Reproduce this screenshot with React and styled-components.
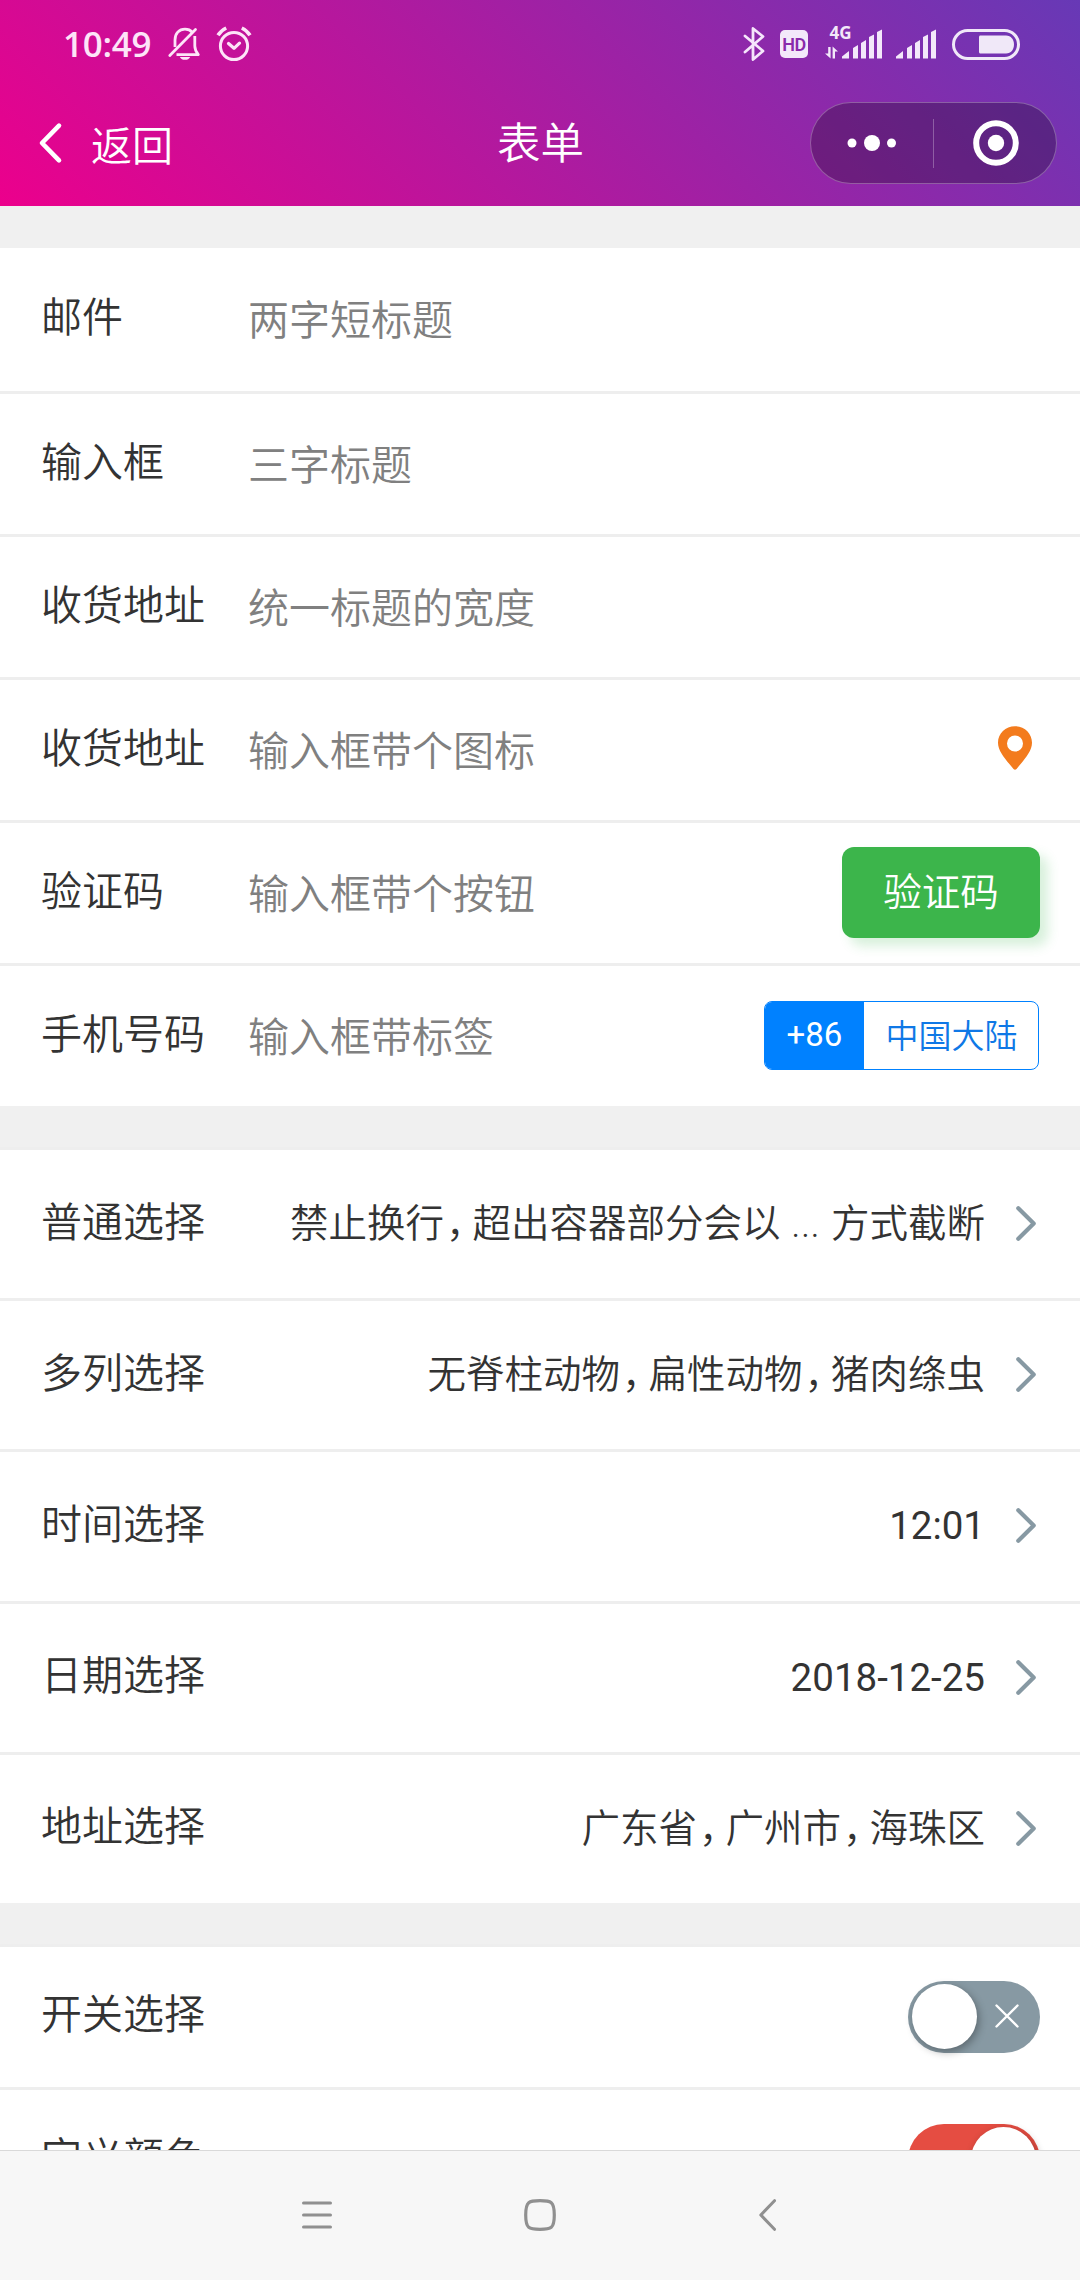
import React from 'react';
import styled, { createGlobalStyle } from 'styled-components';

const GlobalStyle = createGlobalStyle`
  * {
    box-sizing: border-box;
  }
  body {
    margin: 0;
    background: #f0f0f0;
    font-family: Roboto, "Noto Sans CJK SC", sans-serif;
    color: #333;
  }
  svg {
    display: block;
    flex-shrink: 0;
    overflow: visible;
  }
`;

const Screen = styled.div`
  width: 1080px;
  height: 2280px;
  display: flex;
  flex-direction: column;
  overflow: hidden;
  background: #f0f0f0;
`;

const Header = styled.header`
  height: 206px;
  flex-shrink: 0;
  color: #fff;
  background: linear-gradient(45deg, #ec008c, #6739b6);
`;

const StatusBar = styled.div`
  height: 88px;
  padding: 0 60px 0 63px;
  display: flex;
  justify-content: space-between;
  align-items: center;
  color: #fde4f8;
`;

const StatusSide = styled.div`
  display: flex;
  align-items: center;
  height: 88px;
`;

const Clock = styled.span`
  width: 105px;
  font-family: "Open Sans", sans-serif;
  font-size: 35px;
  font-weight: 600;
  letter-spacing: -0.3px;
  line-height: 88px;
`;

const TitleBar = styled.div`
  height: 110px;
  padding: 0 24px 0 39px;
  display: grid;
  grid-template-columns: 246px 1fr 246px;
  align-items: center;
`;

const Back = styled.div`
  display: flex;
  align-items: center;
  gap: 29px;
  font-family: "Noto Sans CJK SC", sans-serif;
  font-size: 41px;
  font-weight: 350;
  line-height: 60px;
  span {
    padding-bottom: 1px;
  }
`;

const Title = styled.h1`
  margin: 0 14px 0 0;
  padding-bottom: 5px;
  text-align: center;
  font-family: "Noto Sans CJK SC", sans-serif;
  font-size: 43.5px;
  font-weight: 350;
  line-height: 60px;
`;

const Capsule = styled.div`
  width: 247px;
  height: 82px;
  display: flex;
  align-items: center;
  border: 1px solid rgba(255, 255, 255, 0.28);
  border-radius: 41px;
  background: rgba(0, 0, 0, 0.25);
`;

const CapsuleHalf = styled.div`
  flex: 1;
  display: flex;
  justify-content: center;
  align-items: center;
  & + & {
    height: 49px;
    border-left: 1px solid rgba(255, 255, 255, 0.28);
  }
`;

const Page = styled.main`
  flex: 1;
  min-height: 0;
  overflow: hidden;
`;

const Group = styled.section`
  margin-top: ${({ $top }) => $top || 41}px;
`;

const Row = styled.div`
  height: ${({ $height }) => $height || 143}px;
  padding: 0 40px 0 41px;
  display: flex;
  align-items: center;
  background: #fff;
  border-top: ${({ $first }) => ($first ? 'none' : '3px solid #eee')};
`;

const Label = styled.div`
  width: 207px;
  flex-shrink: 0;
  padding-bottom: 11px;
  font-family: "Noto Sans CJK SC", sans-serif;
  font-size: 41px;
  font-weight: 350;
  line-height: 60px;
  white-space: nowrap;
`;

const Input = styled.input`
  flex: 1;
  min-width: 0;
  height: 80px;
  padding: 0 0 5px;
  border: none;
  outline: none;
  background: none;
  font-family: "Noto Sans CJK SC", sans-serif;
  font-size: 41px;
  font-weight: 350;
  &::placeholder {
    color: #808080;
    opacity: 1;
  }
`;

const Value = styled.div`
  flex: 1;
  text-align: right;
  margin-right: 31px;
  font-size: 38.5px;
  font-weight: ${({ $digits }) => ($digits ? 400 : 350)};
  line-height: 60px;
  white-space: nowrap;
`;

const Comma = styled.span`
  margin-left: 2px;
  letter-spacing: -12px;
`;

const CodeButton = styled.button`
  width: 198px;
  height: 91px;
  margin-bottom: 2px;
  padding: 0 0 6px;
  border: none;
  border-radius: 12px;
  color: #fff;
  background: #3cb54b;
  box-shadow: 8px 8px 12px rgba(57, 181, 74, 0.2);
  font-family: "Noto Sans CJK SC", sans-serif;
  font-size: 38.6px;
  font-weight: 350;
`;

const Tag = styled.div`
  width: 275px;
  height: 69px;
  display: flex;
  margin: 0 1px 2px 0;
  border: 1px solid #0081ff;
  border-radius: 8px;
  overflow: hidden;
  font-size: 33px;
  line-height: 66px;
  text-align: center;
`;

const TagCode = styled.span`
  width: 99px;
  color: #fff;
  background: #0081ff;
`;

const TagName = styled.span`
  flex: 1;
  padding-left: 1px;
  color: #0f78e6;
  font-family: "Noto Sans CJK SC", sans-serif;
  font-weight: 350;
  line-height: 64px;
`;

const Switch = styled.div`
  width: 132px;
  height: 72px;
  margin-left: auto;
  padding: 3px 4px;
  display: flex;
  flex-direction: ${({ $on }) => ($on ? 'row-reverse' : 'row')};
  align-items: center;
  border-radius: 36px;
  background: ${({ $on }) => ($on ? '#e54d42' : '#8799a3')};
`;

const Knob = styled.div`
  width: 65px;
  height: 65px;
  border-radius: 50%;
  background: #fff;
  box-shadow: 2px 3px 8px rgba(0, 0, 0, 0.32);
`;

const SwitchMark = styled.div`
  flex: 1;
  display: flex;
  justify-content: center;
  padding-bottom: 2px;
`;

const NavBar = styled.nav`
  height: 130px;
  flex-shrink: 0;
  padding: 0 0 2px 302px;
  display: grid;
  grid-template-columns: 222px 235px 17px;
  align-items: center;
  border-top: 1px solid #d9d9d9;
  background: #f7f7f7;
`;

const BellOff = () => (
  <svg width="32" height="34" viewBox="0 0 32 34" fill="none" stroke="currentColor" strokeWidth="2.8">
    <path d="M7 20V13C7 6.5 11 2.2 17 2.2C20 2.2 22.5 3.2 24.3 5.2" />
    <path d="M26.8 9V19C26.8 23 28.6 25.5 30.3 27.6H8.5" strokeLinejoin="round" />
    <path d="M1.8 28.5L27.5 2.5" strokeLinecap="round" />
    <path d="M11.8 30H22.2C21 32 19.5 32.8 17 32.8C14.5 32.8 13 32 11.8 30Z" fill="currentColor" stroke="none" />
  </svg>
);

const Alarm = () => (
  <svg width="36" height="36" viewBox="0 0 36 36" fill="none" stroke="currentColor" strokeWidth="3" style={{ marginLeft: 16 }}>
    <circle cx="18" cy="20" r="13.6" />
    <path d="M12.5 17.5L18 22.3L23.5 17.2" strokeLinecap="round" strokeLinejoin="round" strokeWidth="3.2" />
    <path d="M2 9.3C4 6 6.5 3.8 10.2 2M34 9.3C32 6 29.5 3.8 25.8 2" strokeWidth="3.6" />
  </svg>
);

const Bluetooth = () => (
  <svg width="22" height="36" viewBox="0 0 22 36" fill="none" stroke="#f5e6fb" strokeWidth="2.8" strokeLinecap="round" strokeLinejoin="round">
    <path d="M2 10L20 25L10 33.5V2.5L20 10.5L2 26" />
  </svg>
);

const Hd = styled.span`
  width: 28px;
  height: 28px;
  margin: 0 17px 0 15px;
  border-radius: 5px;
  text-align: center;
  color: #8a2aab;
  background: #f3e8fa;
  font-family: Roboto, sans-serif;
  font-size: 18px;
  font-weight: 600;
  line-height: 29px;
  letter-spacing: -0.4px;
`;

const bars = 'M0 29V27L7 21.5V29ZM11 29V18.5L16 15.5V29ZM19 29V13.5L24 10.5V29ZM27 29V7.5L32 5V29ZM35 29V2.5L40 0V29Z';

const Signal4G = () => (
  <svg width="57" height="34" viewBox="0 0 57 34" fill="#f3e8fa">
    <text x="4.5" y="12" fontFamily="Open Sans, sans-serif" fontSize="17" fontWeight="700">4G</text>
    <path d="M3.2 20H5.6V31.6L0 26.5H3.2ZM7.6 31.6V19.4L13 24.5H10V31.6Z" />
    <path d={bars} transform="translate(17 2.4)" />
  </svg>
);

const Signal = () => (
  <svg width="40" height="34" viewBox="0 0 40 34" fill="#f3e8fa" style={{ margin: '0 16px 0 14px' }}>
    <path d={bars} transform="translate(0 2.4)" />
  </svg>
);

const Battery = () => (
  <svg width="68" height="31" viewBox="0 0 68 31" fill="none">
    <rect x="1.5" y="1.5" width="65" height="28" rx="14" stroke="#f0e8f8" strokeWidth="3" />
    <path d="M28.5 6.5H54C59 6.5 62 10.5 62 15.5C62 20.5 59 24.5 54 24.5H28.5C27.6 24.5 27 23.9 27 23V8C27 7.1 27.6 6.5 28.5 6.5Z" fill="#f0e8f8" />
  </svg>
);

const Arrow = () => (
  <svg width="20" height="36" viewBox="0 0 20 36" fill="none" stroke="#8799a3" strokeWidth="4.2" strokeLinecap="round" strokeLinejoin="round" style={{ marginRight: 4 }}>
    <path d="M2.3 2.3L17.7 17.5L2.3 32.7" />
  </svg>
);

const Pin = () => (
  <svg width="34" height="44" viewBox="0 0 34 44" fill="#f37b1d" style={{ margin: '0 8px 4px 0' }}>
    <path fillRule="evenodd" d="M17 0.3C26.5 0.3 34 7.5 34 16.8C34 26 25 35 18.5 43C17.6 44 16.4 44 15.5 43C9 35 0 26 0 16.8C0 7.5 7.5 0.3 17 0.3ZM17 9.5A8 8 0 1 0 17 25.5A8 8 0 1 0 17 9.5Z" />
  </svg>
);

const inputs = [
  { label: '邮件', placeholder: '两字短标题' },
  { label: '输入框', placeholder: '三字标题' },
  { label: '收货地址', placeholder: '统一标题的宽度' },
  { label: '收货地址', placeholder: '输入框带个图标', extra: <Pin /> },
  { label: '验证码', placeholder: '输入框带个按钮', extra: <CodeButton>验证码</CodeButton> },
  {
    label: '手机号码',
    placeholder: '输入框带标签',
    extra: (
      <Tag>
        <TagCode>+86</TagCode>
        <TagName>中国大陆</TagName>
      </Tag>
    ),
  },
];

const Dots = styled.span`
  margin: 0 1px;
  letter-spacing: 0.4px;
`;

const pickers = [
  { label: '普通选择', value: ['禁止换行', <>超出容器部分会以<Dots> ... </Dots>方式截断</>] },
  { label: '多列选择', value: ['无脊柱动物', '扁性动物', '猪肉绦虫'] },
  { label: '时间选择', value: ['12:01'], digits: true },
  { label: '日期选择', value: ['2018-12-25'], digits: true },
  { label: '地址选择', value: ['广东省', '广州市', '海珠区'] },
];

export default function App() {
  return (
    <Screen>
      <GlobalStyle />
      <Header>
        <StatusBar>
          <StatusSide>
            <Clock>10:49</Clock>
            <BellOff />
            <Alarm />
          </StatusSide>
          <StatusSide>
            <Bluetooth />
            <Hd>HD</Hd>
            <Signal4G />
            <Signal />
            <Battery />
          </StatusSide>
        </StatusBar>
        <TitleBar>
          <Back>
            <svg width="23" height="40" viewBox="0 0 23 40" fill="none" stroke="#fff" strokeWidth="4.6" strokeLinecap="round" strokeLinejoin="round">
              <path d="M20 2.6L3 20L20 37.4" />
            </svg>
            <span>返回</span>
          </Back>
          <Title>表单</Title>
          <Capsule>
            <CapsuleHalf>
              <svg width="50" height="18" viewBox="0 0 50 18" fill="#fff">
                <circle cx="5" cy="9" r="4.5" />
                <circle cx="25" cy="9" r="8" />
                <circle cx="44.5" cy="9" r="4.5" />
              </svg>
            </CapsuleHalf>
            <CapsuleHalf>
              <svg width="46" height="46" viewBox="0 0 46 46">
                <circle cx="24" cy="23" r="19.8" fill="none" stroke="#fff" strokeWidth="6" />
                <circle cx="24" cy="23" r="8.2" fill="#fff" />
              </svg>
            </CapsuleHalf>
          </Capsule>
        </TitleBar>
      </Header>

      <Page>
        <Group $top={42}>
          {inputs.map((item, i) => (
            <Row key={item.placeholder} $first={i === 0}>
              <Label>{item.label}</Label>
              <Input placeholder={item.placeholder} />
              {item.extra}
            </Row>
          ))}
        </Group>

        <Group>
          {pickers.map((item) => (
            <Row key={item.label} $height={151.2}>
              <Label>{item.label}</Label>
              <Value $digits={item.digits}>
                {item.value.map((part, i) => (
                  <React.Fragment key={i}>
                    {i > 0 && <Comma>，</Comma>}
                    {part}
                  </React.Fragment>
                ))}
              </Value>
              <Arrow />
            </Row>
          ))}
        </Group>

        <Group>
          <Row>
            <Label>开关选择</Label>
            <Switch>
              <Knob />
              <SwitchMark>
                <svg width="24" height="24" viewBox="0 0 24 24" stroke="#fff" strokeWidth="2.4" strokeLinecap="round">
                  <path d="M1.5 1.5L22.5 22.5M22.5 1.5L1.5 22.5" />
                </svg>
              </SwitchMark>
            </Switch>
          </Row>
          <Row>
            <Label>定义颜色</Label>
            <Switch $on>
              <Knob />
            </Switch>
          </Row>
        </Group>
      </Page>

      <NavBar>
        <svg width="30" height="28" viewBox="0 0 30 28" stroke="#909090" strokeWidth="3" strokeLinecap="round">
          <path d="M1.5 2H28.5M1.5 14H28.5M1.5 26H28.5" />
        </svg>
        <svg width="32" height="32" viewBox="0 0 32 32" fill="none" stroke="#909090" strokeWidth="3.2">
          <path d="M16 1.7C27 1.7 30.3 2.4 30.3 16C30.3 29.6 27 30.3 16 30.3C5 30.3 1.7 29.6 1.7 16C1.7 2.4 5 1.7 16 1.7Z" />
        </svg>
        <svg width="17" height="32" viewBox="0 0 17 32" fill="none" stroke="#909090" strokeWidth="3" strokeLinecap="round" strokeLinejoin="round">
          <path d="M15.5 1.7L1.8 16L15.5 30.3" />
        </svg>
      </NavBar>
    </Screen>
  );
}
